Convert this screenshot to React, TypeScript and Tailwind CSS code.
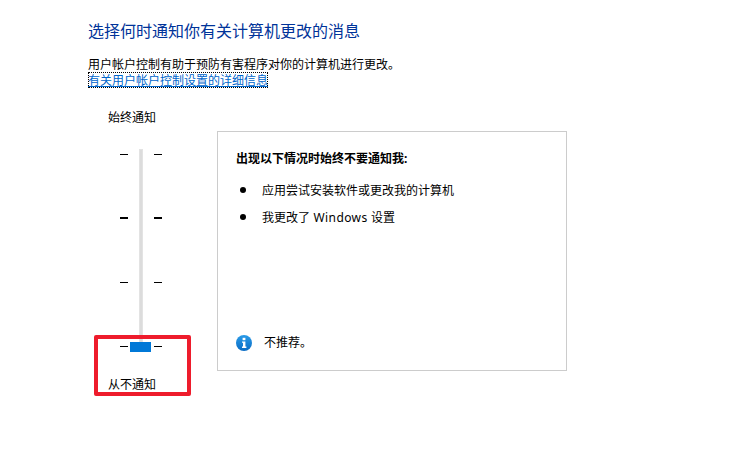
const font = { fontFamily: '"Noto Sans", "Noto Sans CJK SC", sans-serif' }

const InfoIcon: React.FC = () => (
    <svg width="16" height="16" viewBox="0 0 16 16" className="shrink-0">
        <defs>
            <linearGradient id="info" x1="0" y1="0" x2="0" y2="1">
                <stop offset="0" stopColor="#2a9be8" />
                <stop offset="1" stopColor="#0a6cc4" />
            </linearGradient>
        </defs>
        <circle cx="8" cy="8" r="8" fill="url(#info)" />
        <rect x="6.6" y="2.8" width="2.8" height="2.4" fill="#fff" />
        <path d="M6 6.4h3.4v5.2h1V13H6v-1.4h1V7.8H6z" fill="#fff" />
    </svg>
)

const Tick: React.FC<{ bold?: boolean }> = ({ bold }) => (
    <div className="flex justify-between w-[42px] h-[2px] items-center">
        <div className={`w-[8px] bg-black ${bold ? 'h-[2px]' : 'h-px'}`}></div>
        <div className={`w-[8px] bg-black ${bold ? 'h-[2px]' : 'h-px'}`}></div>
    </div>
)

const App: React.FC = () => {
    return (
        <div className="w-[744px] h-[471px] bg-white overflow-hidden text-black text-[12px] leading-[16px] pt-[21px] pl-[88px] relative" style={font}>
            <h1 className="text-[16px] leading-[20px] text-[#003399] font-normal">选择何时通知你有关计算机更改的消息</h1>
            <p className="mt-[15px] h-[16px] leading-[18px]">用户帐户控制有助于预防有害程序对你的计算机进行更改。</p>
            <a className="block w-[180px] h-[16px] leading-[18px] text-[#0066cc] underline outline-1 outline-dotted outline-black -outline-offset-1">有关用户帐户控制设置的详细信息</a>

            <div className="flex mt-[22px]">
                <div className="w-[129px] shrink-0 flex flex-col">
                    <div className="pl-[20px]">始终通知</div>
                    <div className="relative ml-[32px] mt-[27px] w-[42px] h-[194px] flex flex-col justify-between">
                        <div className="absolute left-[19px] top-[-4px] w-[4px] h-[203px] bg-[#dcdcdc] border border-[#e3e3e3]"></div>
                        <Tick />
                        <Tick bold />
                        <Tick />
                        <Tick />
                        <div className="absolute left-[10px] top-[189px] w-[21px] h-[10px] bg-[#0078d7]"></div>
                    </div>
                    <div className="pl-[20px] mt-[30px]">从不通知</div>
                </div>

                <div className="w-[350px] h-[240px] mt-[21px] border border-[#cccccc] pt-[19px] pl-[18px] pr-[18px] pb-[19px] flex flex-col">
                    <div className="font-bold">出现以下情况时始终不要通知我:</div>
                    <ul className="mt-[16px] flex flex-col gap-[11px]">
                        <li className="flex items-center">
                            <div className="w-[6px] h-[6px] rounded-full bg-black ml-[4px] mr-[16px] mb-[2px]"></div>
                            应用尝试安装软件或更改我的计算机
                        </li>
                        <li className="flex items-center">
                            <div className="w-[6px] h-[6px] rounded-full bg-black ml-[4px] mr-[16px] mb-[2px]"></div>
                            <span>我更改了<span className="tracking-[0.4px]"> Windows </span>设置</span>
                        </li>
                    </ul>
                    <div className="mt-auto flex items-center gap-[12px]">
                        <InfoIcon />
                        <span>不推荐。</span>
                    </div>
                </div>
            </div>

            <div className="absolute left-[94px] top-[335px] w-[97px] h-[61px] border-[4px] border-[#ee1c2c] rounded-[2px]"></div>
        </div>
    )
}

export default App
